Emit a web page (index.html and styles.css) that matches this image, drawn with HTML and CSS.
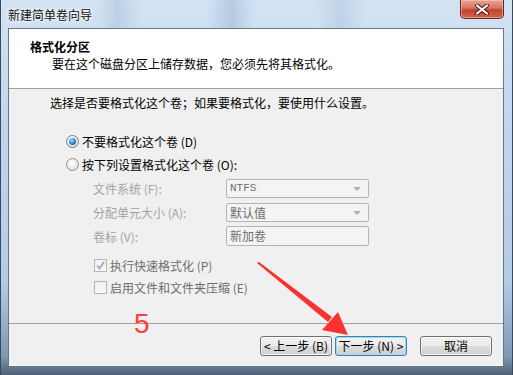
FILE: index.html
```html
<!DOCTYPE html>
<html lang="zh-CN">
<head>
    <meta charset="UTF-8">
    <title>新建简单卷向导</title>
    <link rel="stylesheet" href="styles.css">
</head>
<body>
    <div class="window">
        <div class="titlebar">
            <span class="title">新建简单卷向导</span>
            <div class="close-btn">
                <svg width="16" height="11" viewBox="0 0 16 11">
                    <path d="M3 1.5 L13 9.5 M13 1.5 L3 9.5" stroke="#4a1a14" stroke-width="4" stroke-linecap="round"/>
                    <path d="M3 1.5 L13 9.5 M13 1.5 L3 9.5" stroke="#fff" stroke-width="2.2" stroke-linecap="round"/>
                </svg>
            </div>
        </div>

        <div class="client">
            <div class="wizard-header">
                <h1>格式化分区</h1>
                <p>要在这个磁盘分区上储存数据，您必须先将其格式化。</p>
            </div>

            <div class="wizard-body">
                <p class="intro">选择是否要格式化这个卷；如果要格式化，要使用什么设置。</p>

                <div class="options">
                    <label class="radio-row">
                        <span class="radio checked"></span>不要格式化这个卷 (D)
                    </label>
                    <label class="radio-row">
                        <span class="radio"></span>按下列设置格式化这个卷 (O):
                    </label>

                    <div class="settings">
                        <div class="field">
                            <span class="field-label">文件系统 (F):</span>
                            <div class="select mono">NTFS<span class="caret"></span></div>
                        </div>
                        <div class="field">
                            <span class="field-label">分配单元大小 (A):</span>
                            <div class="select">默认值<span class="caret"></span></div>
                        </div>
                        <div class="field">
                            <span class="field-label">卷标 (V):</span>
                            <div class="textbox">新加卷</div>
                        </div>
                    </div>

                    <div class="checks">
                        <label class="check-row">
                            <span class="checkbox">
                                <svg width="11" height="11" viewBox="0 0 11 11">
                                    <path d="M2 5.5 L4.5 8.5 L9 2" fill="none" stroke="#a8a8a8" stroke-width="1.8"/>
                                </svg>
                            </span>执行快速格式化 (P)
                        </label>
                        <label class="check-row">
                            <span class="checkbox"></span>启用文件和文件夹压缩 (E)
                        </label>
                    </div>
                </div>
            </div>

            <div class="wizard-footer">
                <button class="btn">&lt; 上一步 (B)</button>
                <button class="btn btn-default">下一步 (N) &gt;</button>
                <button class="btn btn-cancel">取消</button>
            </div>
        </div>

        <!-- 标注：红色箭头和步骤编号 -->
        <svg class="annotation" width="513" height="375" viewBox="0 0 513 375">
            <polygon points="257,263 259,262 332,317 328,322" fill="#ff3030"/>
            <polygon points="338,312 322,330 348,335" fill="#ff3030"/>
        </svg>
        <span class="step-num">5</span>
    </div>
</body>
</html>
```

FILE: styles.css
```css
* {
    margin: 0;
    padding: 0;
    box-sizing: border-box;
}

body {
    width: 513px;
    height: 375px;
    overflow: hidden;
    font-family: "Noto Sans CJK SC", "Liberation Sans", sans-serif;
    font-size: 12px;
    color: #000;
    background: #fff;
}

.window {
    position: relative;
    width: 513px;
    height: 375px;
    display: flex;
    flex-direction: column;
    padding: 0 8px 8px 7px;
    border: 1px solid #3b4a5a;
    border-bottom: none;
    border-top: none;
    background: linear-gradient(to bottom, #d3e3f3 0%, #c2d7ee 30%, #b4cbe6 75%, #7f98b3 95%, #4d6176 100%);
}

.titlebar {
    height: 28px;
    display: flex;
    justify-content: space-between;
    align-items: flex-start;
    background:
        linear-gradient(to right, transparent 18%, rgba(150, 175, 205, 0.35) 22%, transparent 27%,
            transparent 40%, rgba(130, 160, 195, 0.35) 45%, transparent 50%,
            transparent 62%, rgba(150, 175, 205, 0.3) 67%, transparent 72%);
}

.title {
    margin-top: 7px;
    line-height: 16px;
    color: #111;
    text-shadow: 0 0 6px #fff, 0 0 3px #fff;
}

.close-btn {
    width: 44px;
    height: 19px;
    display: flex;
    align-items: center;
    justify-content: center;
    border: 1px solid #5a2a24;
    border-top: none;
    border-radius: 0 0 5px 5px;
    background: linear-gradient(to bottom, #e8a394 0%, #d8735f 45%, #c2422b 55%, #d0634c 100%);
    box-shadow: inset 0 0 0 1px rgba(255, 210, 200, 0.5);
}

.client {
    flex: 1;
    display: flex;
    flex-direction: column;
    border: 1px solid #65788c;
    background: #f0f0f0;
}

.wizard-header {
    height: 60px;
    padding: 10px 0 0 21px;
    background: #fff;
    border-bottom: 1px solid #a0a0a0;
}

.wizard-header h1 {
    font-size: 12px;
    font-weight: bold;
    line-height: 16px;
}

.wizard-header p {
    padding-left: 22px;
    line-height: 16px;
    margin-top: 1px;
}

.wizard-body {
    flex: 1;
    padding: 6px 0 0 41px;
}

.intro {
    line-height: 16px;
}

.options {
    margin-top: 19px;
    padding-left: 16px;
}

.radio-row,
.check-row {
    display: flex;
    align-items: center;
    height: 23px;
}

.radio {
    width: 13px;
    height: 13px;
    margin-right: 3px;
    border-radius: 50%;
    border: 1px solid #929292;
    background: radial-gradient(circle at 40% 35%, #fff 0%, #e6e6e6 60%, #cfcfcf 100%);
    position: relative;
}

.radio.checked {
    border-color: #6f7f90;
}

.radio.checked::after {
    content: "";
    position: absolute;
    left: 2px;
    top: 2px;
    width: 7px;
    height: 7px;
    border-radius: 50%;
    background: radial-gradient(circle at 40% 35%, #b6e4ff 0%, #2f8fdc 45%, #0d4d92 100%);
}

.settings {
    padding-left: 27px;
}

.field {
    display: flex;
    align-items: center;
    height: 24px;
}

.field-label {
    width: 133px;
    color: #a3a3a3;
}

.select,
.textbox {
    position: relative;
    width: 143px;
    height: 19px;
    padding-left: 3px;
    line-height: 17px;
    color: #6d6d6d;
    border: 1px solid #b4b4b4;
    border-radius: 2px;
    background: #f4f4f4;
}

.textbox {
    height: 20px;
    line-height: 18px;
}

.mono {
    font-family: "Liberation Mono", monospace;
    font-size: 11px;
}

.caret {
    position: absolute;
    right: 7px;
    top: 7px;
    border-left: 4px solid transparent;
    border-right: 4px solid transparent;
    border-top: 4px solid #b0b0b0;
}

.checks {
    margin-top: 6px;
    padding-left: 28px;
}

.check-row {
    height: 22px;
    color: #6d6d6d;
}

.checkbox {
    width: 13px;
    height: 13px;
    margin-right: 3px;
    border: 1px solid #b5b5b5;
    background: linear-gradient(to bottom, #f0f0f0, #fafafa);
    display: flex;
    align-items: center;
    justify-content: center;
}

.wizard-footer {
    display: flex;
    justify-content: flex-end;
    gap: 3px;
    height: 43px;
    padding: 12px 11px 0 0;
    border-top: 1px solid #a0a0a0;
}

.btn {
    width: 72px;
    height: 20px;
    font-family: inherit;
    font-size: 12px;
    line-height: 16px;
    color: #000;
    border: 1px solid #707070;
    border-radius: 3px;
    background: linear-gradient(to bottom, #f2f2f2 0%, #ebebeb 48%, #dddddd 52%, #cfcfcf 100%);
    box-shadow: inset 0 0 0 1px rgba(255, 255, 255, 0.7);
}

.btn-default {
    border-color: #3c7fb1;
    box-shadow: inset 0 0 0 1px #9edaf8;
}

.btn-cancel {
    margin-left: 10px;
}

.annotation {
    position: absolute;
    left: -1px;
    top: 0;
    pointer-events: none;
}

.step-num {
    position: absolute;
    left: 133px;
    top: 308px;
    font-family: "Liberation Sans", sans-serif;
    font-size: 28px;
    line-height: 32px;
    color: #ff3b3b;
}
```
